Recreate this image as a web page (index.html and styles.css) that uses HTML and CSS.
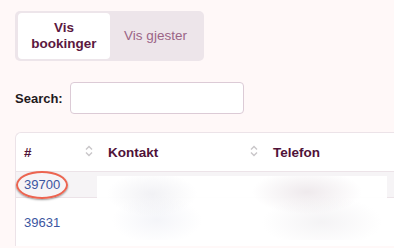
FILE: index.html
```html
<!DOCTYPE html>
<html lang="no">
<head>
  <meta charset="UTF-8">
  <title>Bookinger</title>
  <link rel="stylesheet" href="styles.css">
</head>
<body>

  <div class="tabs">
    <div class="tab active">Vis<br>bookinger</div>
    <div class="tab">Vis gjester</div>
  </div>

  <div class="search">
    <label for="search">Search:</label>
    <input id="search" type="text">
  </div>

  <div class="card">
    <table>
      <thead>
        <tr>
          <th class="col-id"><span>#</span><svg class="sort" viewBox="0 0 8 12"><path d="M1 4.5 4 1.5 7 4.5M1 7.5 4 10.5 7 7.5"/></svg></th>
          <th class="col-contact"><span>Kontakt</span><svg class="sort" viewBox="0 0 8 12"><path d="M1 4.5 4 1.5 7 4.5M1 7.5 4 10.5 7 7.5"/></svg></th>
          <th class="col-phone"><span>Telefon</span></th>
        </tr>
      </thead>
      <tbody>
        <tr class="odd">
          <td><a href="#">39700</a></td>
          <td></td>
          <td></td>
        </tr>
        <tr class="tall">
          <td><a href="#">39631</a></td>
          <td></td>
          <td></td>
        </tr>
      </tbody>
    </table>
    <div class="circle"></div>
    <div class="blurred"></div>
  </div>

</body>
</html>
```

FILE: styles.css
```css
body {
  margin: 0;
  padding: 11px 15px 0;
  background: #fff8f8;
  font-family: 'Liberation Sans', Arial, sans-serif;
  font-size: 13px;
  color: #1f1a1d;
  overflow: hidden;
}

.tabs {
  display: flex;
  width: 183px;
  height: 46px;
  padding: 2px 3px;
  background: #ede5ea;
  border-radius: 5px;
}

.tab {
  flex: 1;
  display: flex;
  align-items: center;
  justify-content: center;
  text-align: center;
  color: #9b6486;
  font-size: 13.5px;
  line-height: 16px;
}

.tab.active {
  flex: none;
  width: 92px;
  background: white;
  border-radius: 4px;
  color: #5b1840;
  font-weight: bold;
}

.search {
  display: flex;
  align-items: center;
  margin-top: 21px;
}

.search label {
  font-weight: bold;
  color: #1f1a1d;
}

.search input {
  width: 170px;
  height: 28px;
  margin: 0 0 0 7px;
  padding: 1px;
  border: 1px solid #dccbd6;
  border-radius: 4px;
  background: white;
}

.card {
  position: relative;
  margin: 18px -30px 0 0;
  background: white;
  border: 1px solid #ece3e8;
  border-right: none;
  border-bottom: none;
  border-radius: 6px 0 0 0;
}

table {
  width: 100%;
  border-collapse: collapse;
}

th {
  height: 38px;
  padding: 0 6px 0 8px;
  text-align: left;
  font-weight: bold;
  font-size: 13.5px;
  color: #4f1238;
  border-bottom: 1px solid #ece3e8;
}

th span {
  vertical-align: middle;
}

.col-id {
  width: 69px;
}

.col-contact {
  width: 150px;
  padding-left: 9px;
}

.col-phone {
  padding-left: 9px;
}

.sort {
  float: right;
  width: 8px;
  height: 12px;
  margin-top: 1px;
  fill: none;
  stroke: #c9c6c9;
  stroke-width: 1.4;
}

td {
  padding: 0 8px;
  height: 25px;
}

tr.odd td {
  background: #f6f4f6;
  border-bottom: 1px solid #ece3e8;
}

tr.tall td {
  height: 48px;
}

td a {
  color: #3b55a0;
  text-decoration: none;
  font-size: 13px;
}

.circle {
  position: absolute;
  left: 0;
  top: 38px;
  width: 48px;
  height: 24px;
  border: 2px solid #ec6450;
  border-radius: 50%;
  box-shadow: 0 1px 2px rgba(0, 0, 0, 0.4);
}

.blurred {
  position: absolute;
  left: 81px;
  top: 43px;
  width: 290px;
  height: 64px;
  background:
    radial-gradient(ellipse 45px 22px at 55px 18px, rgba(225, 225, 232, 0.45), transparent),
    radial-gradient(ellipse 45px 24px at 60px 44px, rgba(228, 230, 240, 0.4), transparent),
    radial-gradient(ellipse 55px 22px at 210px 16px, rgba(222, 212, 218, 0.5), transparent),
    radial-gradient(ellipse 60px 26px at 225px 46px, rgba(228, 226, 230, 0.4), transparent),
    rgba(255, 255, 255, 0.95);
}
```
